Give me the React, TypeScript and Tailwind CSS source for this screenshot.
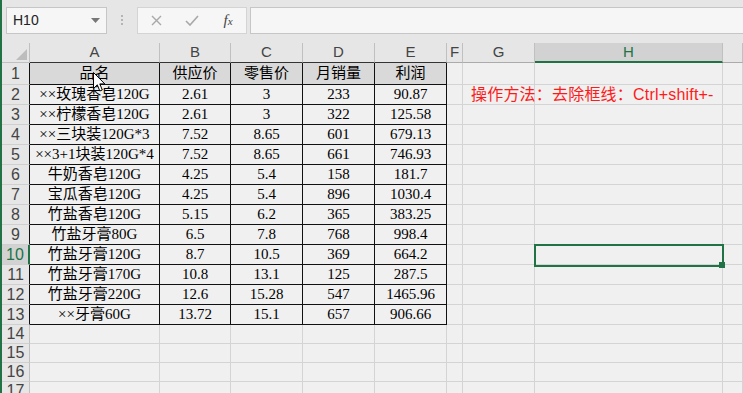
import React from "react";

const W = [
  "w-[28px]",
  "w-[130px]",
  "w-[71px]",
  "w-[72px]",
  "w-[72px]",
  "w-[72px]",
  "w-[16px]",
  "w-[72px]",
  "w-[188px]",
  "w-[20px]",
];

const LETTERS = ["", "A", "B", "C", "D", "E", "F", "G", "H", ""];

const DATA: string[][] = [
  ["品名", "供应价", "零售价", "月销量", "利润"],
  ["××玫瑰香皂120G", "2.61", "3", "233", "90.87"],
  ["××柠檬香皂120G", "2.61", "3", "322", "125.58"],
  ["××三块装120G*3", "7.52", "8.65", "601", "679.13"],
  ["××3+1块装120G*4", "7.52", "8.65", "661", "746.93"],
  ["牛奶香皂120G", "4.25", "5.4", "158", "181.7"],
  ["宝瓜香皂120G", "4.25", "5.4", "896", "1030.4"],
  ["竹盐香皂120G", "5.15", "6.2", "365", "383.25"],
  ["竹盐牙膏80G", "6.5", "7.8", "768", "998.4"],
  ["竹盐牙膏120G", "8.7", "10.5", "369", "664.2"],
  ["竹盐牙膏170G", "10.8", "13.1", "125", "287.5"],
  ["竹盐牙膏220G", "12.6", "15.28", "547", "1465.96"],
  ["××牙膏60G", "13.72", "15.1", "657", "906.66"],
];

const cellFont = {
  fontFamily: '"Liberation Serif", "Noto Sans CJK SC", serif',
};

function Toolbar() {
  return (
    <div className="h-[43px] flex items-start pt-[7px] shrink-0">
      <div className="ml-[4px] w-[101px] h-[27px] bg-[#f6f6f6] border border-[#c6c6c6] flex items-center justify-between pl-[6px] pr-[6px]">
        <span className="text-[14px] text-[#222] font-['Liberation_Sans',sans-serif]">H10</span>
        <svg width="9" height="5" viewBox="0 0 9 5">
          <path d="M0 0 L9 0 L4.5 5 Z" fill="#777" />
        </svg>
      </div>
      <div className="ml-[14px] mt-[8px] flex flex-col gap-[2px]">
        <div className="w-[2px] h-[2px] bg-[#b4b4b4]" />
        <div className="w-[2px] h-[2px] bg-[#b4b4b4]" />
        <div className="w-[2px] h-[2px] bg-[#b4b4b4]" />
      </div>
      <div className="ml-[14px] w-[110px] h-[27px] bg-[#f6f6f6] border border-[#d4d4d4] flex items-center">
        <div className="w-[36px] flex justify-center">
          <svg width="11" height="11" viewBox="0 0 11 11">
            <path d="M1 1 L10 10 M10 1 L1 10" stroke="#a8a8a8" strokeWidth="1.4" />
          </svg>
        </div>
        <div className="w-[36px] flex justify-center">
          <svg width="14" height="11" viewBox="0 0 14 11">
            <path d="M1 6 L5 10 L13 1" stroke="#a8a8a8" strokeWidth="1.6" fill="none" />
          </svg>
        </div>
        <div className="w-[36px] flex justify-center">
          <span className="italic text-[15px] text-[#444] font-['Liberation_Serif',serif] leading-none">
            f<span className="text-[11px]">x</span>
          </span>
        </div>
      </div>
      <div className="ml-[3px] flex-1 h-[27px] bg-[#f6f6f6] border border-r-0 border-[#c6c6c6]" />
    </div>
  );
}

function HeaderRow() {
  return (
    <div className="flex h-[20px] shrink-0">
      {LETTERS.map((l, i) => {
        if (i === 0) {
          return (
            <div
              key={i}
              className={`${W[i]} shrink-0 h-full relative bg-[#e6e6e6] border-r border-b border-[#c0c0c0]`}
            >
              <svg className="absolute right-[2px] bottom-[2px]" width="11" height="11" viewBox="0 0 11 11">
                <path d="M11 0 L11 11 L0 11 Z" fill="#bdbdbd" />
              </svg>
            </div>
          );
        }
        if (l === "H") {
          return (
            <div
              key={i}
              className={`${W[i]} shrink-0 h-full flex items-center justify-center bg-[#d2d2d2] border-r border-r-[#c0c0c0] border-b-2 border-b-[#217346] text-[#217346] text-[15px] font-['Liberation_Sans',sans-serif]`}
            >
              {l}
            </div>
          );
        }
        const inTable = i >= 1 && i <= 5;
        return (
          <div
            key={i}
            className={`${W[i]} shrink-0 h-full flex items-center justify-center bg-[#e6e6e6] border-r border-r-[#c0c0c0] border-b ${inTable ? "border-b-[#333]" : "border-b-[#ababab]"} text-[#444] text-[15px] font-['Liberation_Sans',sans-serif]`}
          >
            {l}
          </div>
        );
      })}
    </div>
  );
}

function RowHeader({ n }: { n: number }) {
  if (n === 10) {
    return (
      <div className="w-[28px] shrink-0 h-full flex items-center justify-center bg-[#d2d2d2] border-b border-b-[#cfcfcf] border-r-2 border-r-[#217346] text-[#217346] text-[16px] font-['Liberation_Sans',sans-serif]">
        {n}
      </div>
    );
  }
  const black = n <= 13;
  return (
    <div
      className={`w-[28px] shrink-0 h-full flex items-center justify-center bg-[#e6e6e6] border-b border-b-[#cfcfcf] border-r ${black ? "border-r-[#111]" : "border-r-[#c0c0c0]"} text-[#444] text-[16px] font-['Liberation_Sans',sans-serif]`}
    >
      {n}
    </div>
  );
}

function Row({ n }: { n: number }) {
  const h = n === 1 ? "h-[22px]" : n <= 13 ? "h-[20px]" : "h-[19px]";
  const data = n <= 13 ? DATA[n - 1] : null;
  return (
    <div className={`flex ${h} shrink-0`}>
      <RowHeader n={n} />
      {W.slice(1).map((w, j) => {
        const col = j + 1;
        const inTable = data !== null && col <= 5;
        if (inTable) {
          return (
            <div
              key={col}
              style={cellFont}
              className={`${w} shrink-0 h-full flex items-center justify-center border-r border-b border-[#111] text-[15px] text-black leading-none whitespace-nowrap overflow-hidden ${n === 1 ? "bg-[#d9d9d9]" : "bg-[#f0f0f0]"}`}
            >
              {data![col - 1]}
            </div>
          );
        }
        const isG2 = n === 2 && col === 7;
        const isH10 = n === 10 && col === 8;
        return (
          <div
            key={col}
            className={`${w} shrink-0 h-full relative bg-[#f0f0f0] border-r border-b border-[#d4d4d4] ${isG2 ? "flex items-center overflow-visible" : ""}`}
          >
            {isG2 && (
              <span className="relative z-10 pl-[8px] whitespace-nowrap text-[16px] tracking-[0.2px] text-[#ff1a1a] leading-none font-['Liberation_Sans','Noto_Sans_CJK_SC',sans-serif]">
                操作方法：去除框线：Ctrl+shift+-
              </span>
            )}
            {isH10 && (
              <>
                <div className="absolute left-[-1px] top-[-1px] w-[190px] h-[23px] border-2 border-[#217346] z-10 pointer-events-none" />
                <div className="absolute right-[-3px] bottom-[-4px] w-[6px] h-[6px] bg-[#217346] z-20" />
              </>
            )}
          </div>
        );
      })}
    </div>
  );
}

export default function App() {
  const rows = Array.from({ length: 17 }, (_, i) => i + 1);
  return (
    <div className="w-[743px] h-[393px] overflow-hidden bg-[#e6e6e6] flex relative">
      <div className="w-[2px] h-full bg-[#217346] shrink-0" />
      <div className="flex-1 flex flex-col min-w-0">
        <Toolbar />
        <HeaderRow />
        {rows.map((n) => (
          <Row key={n} n={n} />
        ))}
      </div>
      <svg
        className="absolute left-[93px] top-[72px] z-30 pointer-events-none"
        width="13"
        height="21"
        viewBox="0 0 13 21"
      >
        <path
          d="M0.5 0.5 L0.5 16.5 L4.3 12.8 L6.8 19 L9.3 18 L6.8 11.9 L11.8 11.9 Z"
          fill="#fff"
          stroke="#000"
          strokeWidth="1"
          strokeLinejoin="round"
        />
      </svg>
    </div>
  );
}
